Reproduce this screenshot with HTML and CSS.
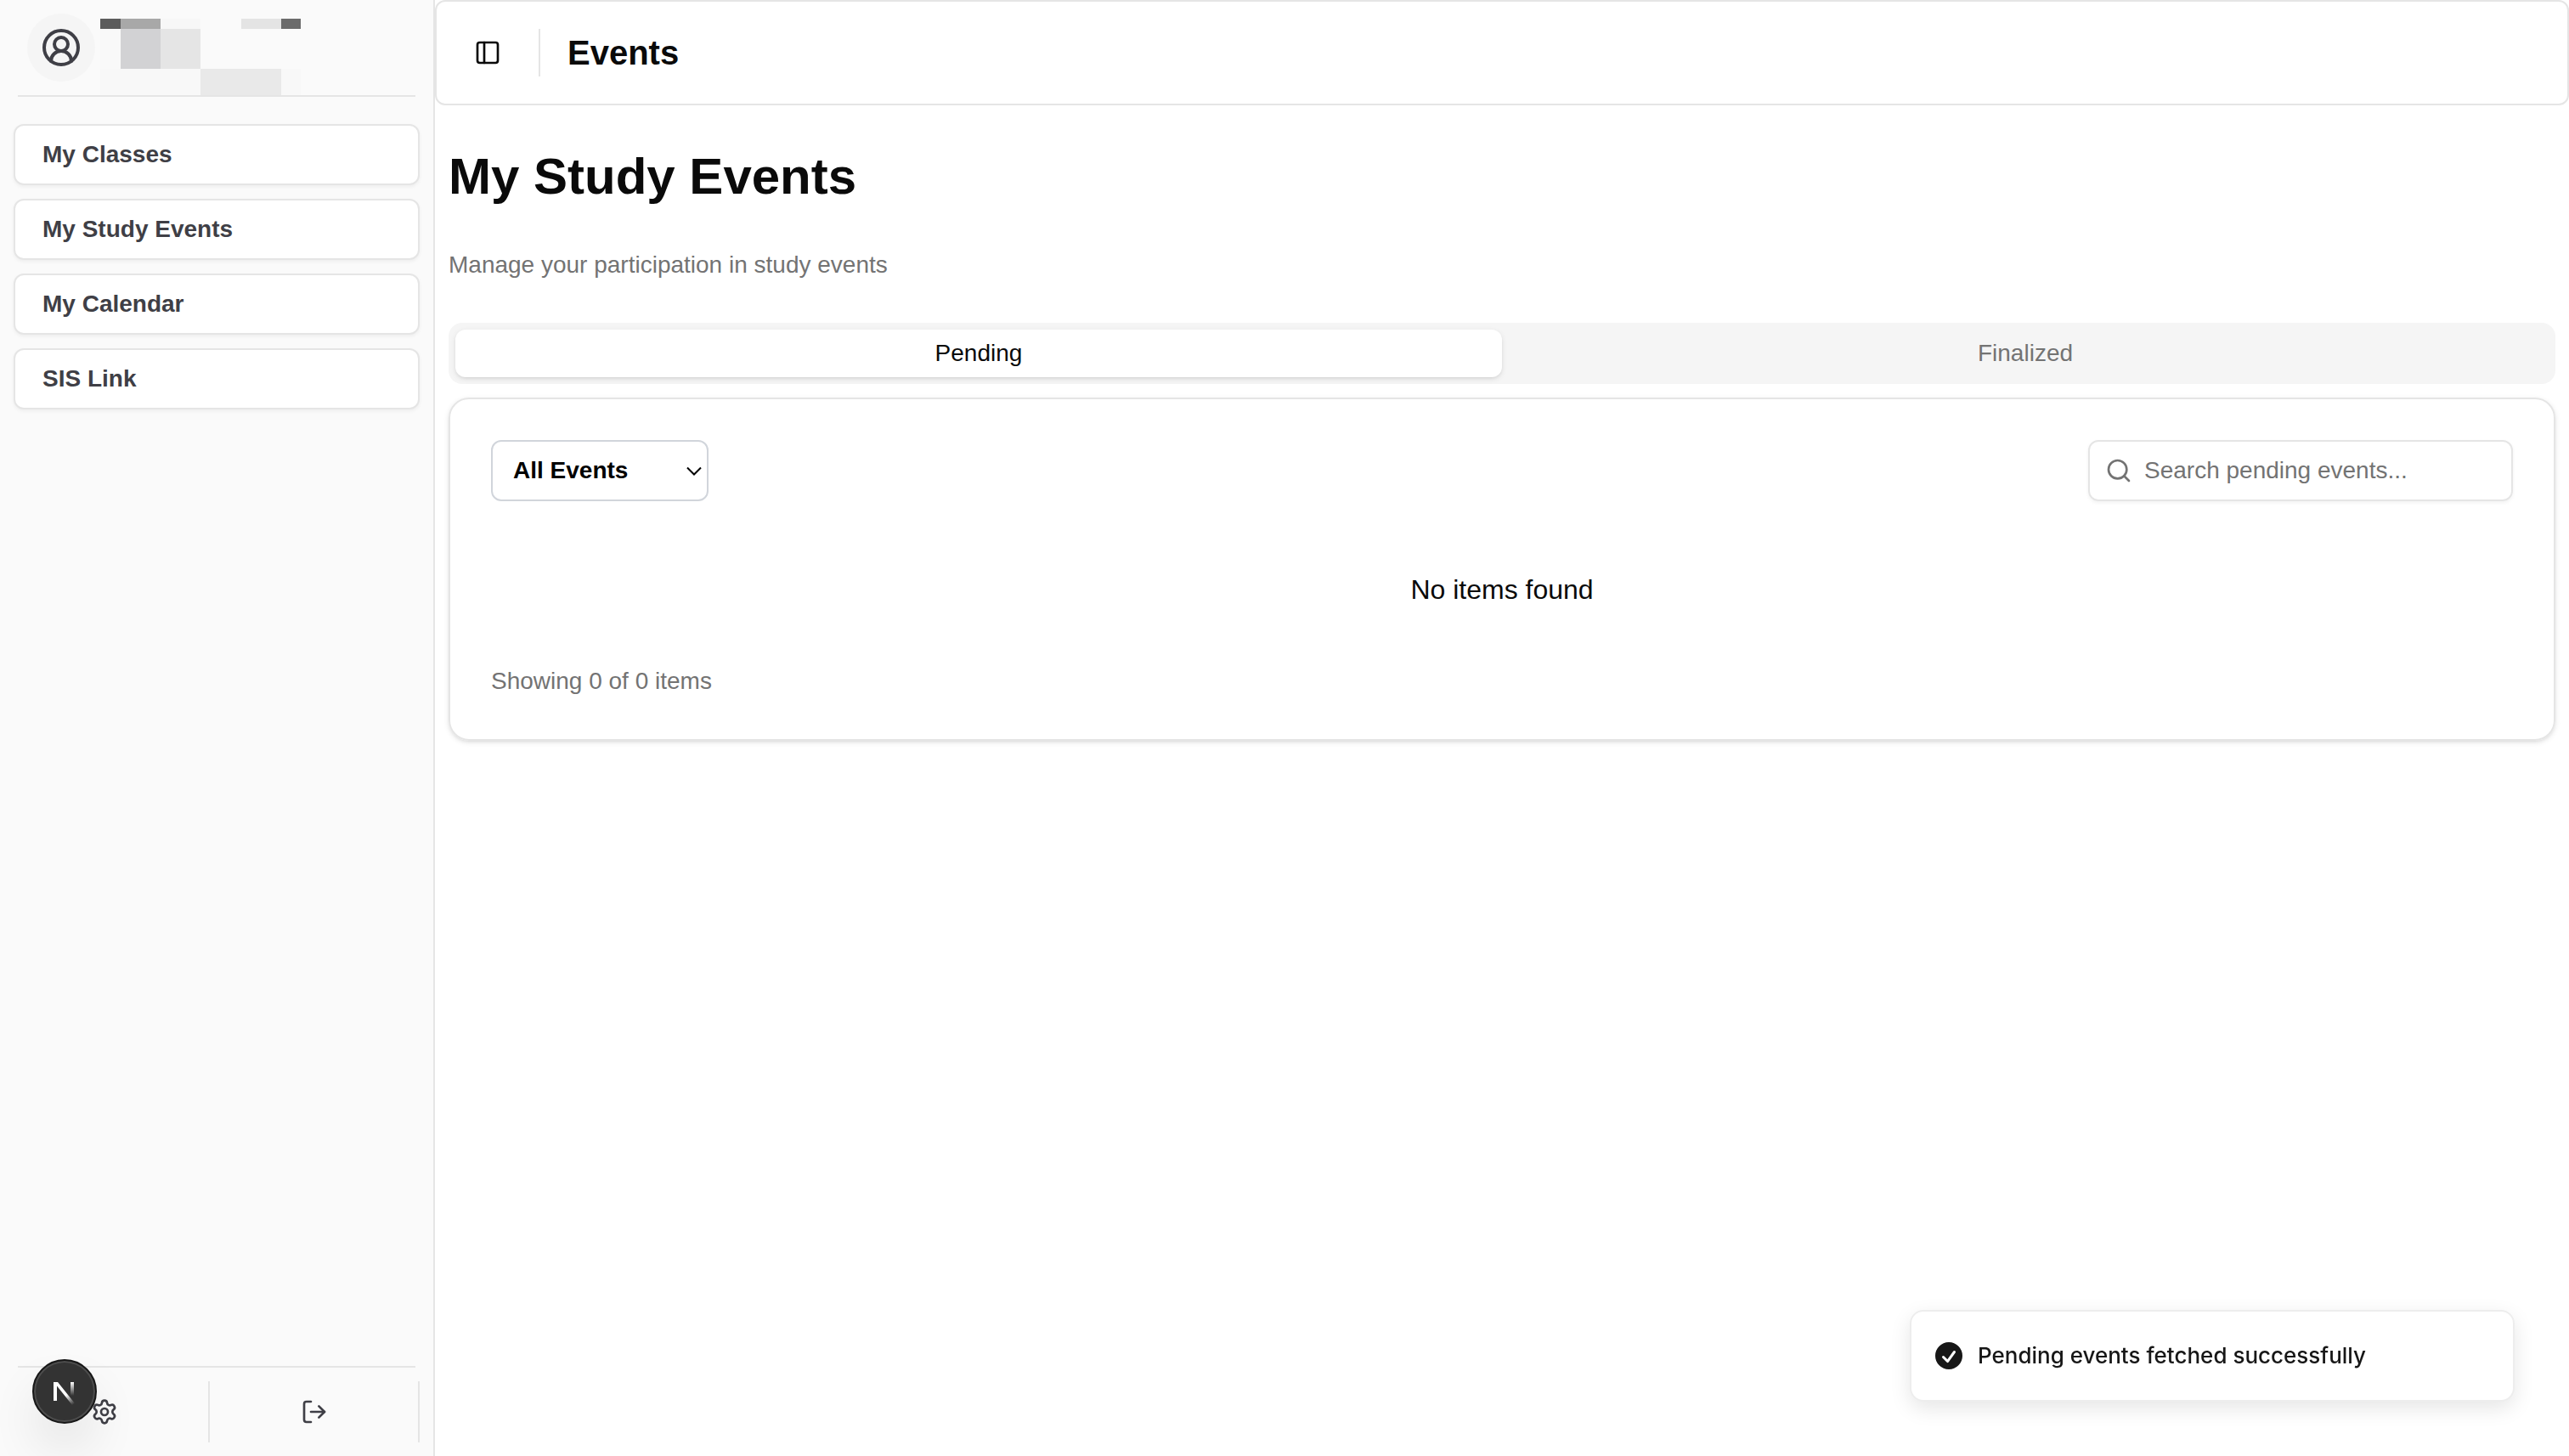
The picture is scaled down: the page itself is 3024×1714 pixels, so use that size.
FILE: index.html
```html
<!DOCTYPE html>
<html lang="en">
<head>
<meta charset="utf-8">
<meta name="viewport" content="width=device-width, initial-scale=1">
<title>Events</title>
<link rel="stylesheet" href="styles.css">
</head>
<body>
<div class="app">
  <aside class="sidebar">
    <header class="profile">
      <span class="avatar">
        <svg class="icon icon-lg" viewBox="0 0 24 24" aria-hidden="true"><path d="M18 20a6 6 0 0 0-12 0"/><circle cx="12" cy="10" r="4"/><circle cx="12" cy="12" r="10"/></svg>
      </span>
      <svg class="redacted" viewBox="0 0 236 90" shape-rendering="crispEdges" aria-hidden="true">
        <rect width="24" height="12" fill="#5c5c5c"/>
        <rect x="24" width="47" height="12" fill="#a8a8a8"/>
        <rect x="71" width="47" height="12" fill="#f7f7f7"/>
        <rect x="166" width="47" height="12" fill="#e4e4e4"/>
        <rect x="213" width="23" height="12" fill="#6b6b6b"/>
        <rect y="12" width="24" height="47" fill="#f9f9f9"/>
        <rect x="24" y="12" width="47" height="47" fill="#d2d2d4"/>
        <rect x="71" y="12" width="47" height="47" fill="#e5e5e5"/>
        <rect y="59" width="118" height="31" fill="#f8f8f8"/>
        <rect x="118" y="59" width="95" height="31" fill="#e9e9e9"/>
        <rect x="213" y="59" width="23" height="31" fill="#f8f8f8"/>
      </svg>
    </header>
    <nav class="menu">
      <a class="menu-link" href="#classes">My Classes</a>
      <a class="menu-link" href="#events">My Study Events</a>
      <a class="menu-link" href="#calendar">My Calendar</a>
      <a class="menu-link" href="#sis">SIS Link</a>
    </nav>
    <footer class="sidebar-footer">
      <button class="footer-button" type="button" aria-label="Settings">
        <svg class="icon" viewBox="0 0 24 24" aria-hidden="true"><path d="M9.671 4.136a2.340 2.340 0 0 1 4.659 0 2.340 2.340 0 0 0 3.319 1.915 2.340 2.340 0 0 1 2.330 4.033 2.340 2.340 0 0 0 0 3.831 2.340 2.340 0 0 1-2.330 4.033 2.340 2.340 0 0 0-3.319 1.915 2.340 2.340 0 0 1-4.659 0 2.340 2.340 0 0 0-3.320-1.915 2.340 2.340 0 0 1-2.330-4.033 2.340 2.340 0 0 0 0-3.831A2.340 2.340 0 0 1 6.350 6.051a2.340 2.340 0 0 0 3.319-1.915"/><circle cx="12" cy="12" r="3"/></svg>
      </button>
      <button class="footer-button" type="button" aria-label="Log out">
        <svg class="icon" viewBox="0 0 24 24" aria-hidden="true"><path d="M9 21H5a2 2 0 0 1-2-2V5a2 2 0 0 1 2-2h4"/><path d="m16 17 5-5-5-5"/><path d="M21 12H9"/></svg>
      </button>
    </footer>
  </aside>

  <main class="content">
    <header class="topbar">
      <button class="toggle" type="button" aria-label="Toggle sidebar">
        <svg class="icon" viewBox="0 0 24 24" aria-hidden="true"><rect x="3" y="3" width="18" height="18" rx="2"/><path d="M9 3v18"/></svg>
      </button>
      <span class="divider"></span>
      <h2 class="topbar-title">Events</h2>
    </header>
    <div class="page">
      <h1 class="page-title">My Study Events</h1>
      <p class="page-lead">Manage your participation in study events</p>
      <div class="tabs" role="tablist">
        <button class="tab tab-active" type="button" role="tab" aria-selected="true">Pending</button>
        <button class="tab" type="button" role="tab" aria-selected="false">Finalized</button>
      </div>
      <section class="card">
        <div class="toolbar">
          <div class="filter">
            <select class="filter-select" aria-label="Filter events"><option>All Events</option></select>
            <svg class="chevron" viewBox="0 0 18 12" aria-hidden="true"><path d="M1 1.500 9 9.500 17 1.500"/></svg>
          </div>
          <label class="search">
            <svg class="icon" viewBox="0 0 24 24" aria-hidden="true"><circle cx="11" cy="11" r="8"/><path d="m21 21-4.300-4.300"/></svg>
            <input class="search-input" type="text" placeholder="Search pending events..." aria-label="Search pending events">
          </label>
        </div>
        <p class="empty">No items found</p>
        <p class="count">Showing 0 of 0 items</p>
      </section>
    </div>
  </main>
</div>

<div class="toast" role="status">
  <svg class="toast-icon" viewBox="0 0 20 20" aria-hidden="true"><path fill-rule="evenodd" clip-rule="evenodd" d="M10 18a8 8 0 100-16 8 8 0 000 16zm3.857-9.809a.75.75 0 00-1.214-.882l-3.483 4.790-1.880-1.880a.75.75 0 10-1.060 1.061l2.500 2.500a.75.75 0 001.137-.089l4-5.500z"/></svg>
  <span>Pending events fetched successfully</span>
</div>

<button class="dev-badge" type="button" aria-label="Open dev tools">
  <svg class="dev-mark" viewBox="0 0 40 40" aria-hidden="true">
    <defs>
      <linearGradient id="diagonal" gradientUnits="userSpaceOnUse" x1="22" y1="24" x2="31" y2="35"><stop stop-color="#fff"/><stop offset="1" stop-color="#fff" stop-opacity="0"/></linearGradient>
      <linearGradient id="stem" gradientUnits="userSpaceOnUse" x1="28" y1="9" x2="28" y2="25"><stop stop-color="#fff"/><stop offset="1" stop-color="#fff" stop-opacity="0"/></linearGradient>
    </defs>
    <path d="M7 9h4v22H7z" fill="#fff"/>
    <path d="M7 9h5l20 25-3 2L9 11z" fill="url(#diagonal)"/>
    <path d="M27 9h4v16h-4z" fill="url(#stem)"/>
  </svg>
</button>
</body>
</html>
```
FILE: styles.css
```css
:root {
  --border: #e5e5e5;
  --muted: #737373;
  --ink: #0a0a0a;
  --sidebar-ink: #3f3f46;
  --shadow-xs: 0 2px 4px rgba(0, 0, 0, 0.05);
  --shadow-sm: 0 2px 6px rgba(0, 0, 0, 0.1), 0 2px 4px -2px rgba(0, 0, 0, 0.1);
}

* { box-sizing: border-box; }

body {
  margin: 0;
  background: #fff;
  color: var(--ink);
  font-family: "Liberation Sans", Arial, sans-serif;
  font-size: 28px;
  line-height: 40px;
}

h1, h2, p { margin: 0; }

button, input, select { font: inherit; color: inherit; }

button {
  display: flex;
  align-items: center;
  justify-content: center;
  padding: 0;
  border: 0;
  background: none;
}

.icon {
  width: 32px;
  height: 32px;
  flex: none;
  fill: none;
  stroke: currentColor;
  stroke-width: 2;
  stroke-linecap: round;
  stroke-linejoin: round;
}

.icon-lg { width: 48px; height: 48px; }

.app { display: flex; min-height: 100vh; }

/* Sidebar */
.sidebar {
  display: flex;
  flex-direction: column;
  flex: none;
  width: 512px;
  border-right: 2px solid var(--border);
  background: #fafafa;
  color: var(--sidebar-ink);
}

.profile {
  display: flex;
  gap: 6px;
  height: 114px;
  margin: 0 21px;
  padding-left: 11px;
  border-bottom: 2px solid var(--border);
}

.avatar {
  display: flex;
  align-items: center;
  justify-content: center;
  width: 80px;
  height: 80px;
  margin-top: 16px;
  border-radius: 50%;
  background: #f5f5f5;
}

.redacted { width: 236px; height: 90px; margin-top: 22px; }

.menu {
  display: flex;
  flex-direction: column;
  gap: 16px;
  padding: 32px 16px;
}

.menu-link {
  padding: 14px 32px;
  border: 2px solid var(--border);
  border-radius: 12px;
  background: #fff;
  box-shadow: var(--shadow-xs);
  color: inherit;
  font-weight: 700;
  text-decoration: none;
}

.sidebar-footer {
  display: flex;
  margin-top: auto;
  padding: 18px 16px 16px 0;
  background: linear-gradient(var(--border), var(--border)) 21px 0 / calc(100% - 42px) 2px no-repeat;
}

.footer-button {
  flex: 1;
  height: 72px;
  border-right: 2px solid var(--border);
}

/* Main area */
.content { flex: 1; min-width: 0; }

.topbar {
  display: flex;
  align-items: center;
  height: 124px;
  padding: 0 32px;
  border: 2px solid var(--border);
  border-radius: 12px;
}

.toggle { width: 56px; height: 56px; }

.divider {
  width: 2px;
  height: 56px;
  margin: 0 32px;
  background: var(--border);
}

.topbar-title { font-size: 40px; line-height: 56px; }

.page { padding: 48px 16px; }

.page-title { font-size: 60px; line-height: 72px; }

.page-lead { margin: 48px 0; color: var(--muted); }

.tabs {
  display: grid;
  grid-template-columns: 1fr 1fr;
  padding: 8px;
  border-radius: 16px;
  background: #f5f5f5;
}

.tab {
  height: 56px;
  border-radius: 12px;
  color: var(--muted);
}

.tab-active {
  background: #fff;
  box-shadow: var(--shadow-sm);
  color: var(--ink);
}

.card {
  margin-top: 16px;
  padding: 48px;
  border: 2px solid var(--border);
  border-radius: 24px;
  box-shadow: var(--shadow-sm);
}

.toolbar {
  display: flex;
  align-items: center;
  justify-content: space-between;
}

.filter { position: relative; }

.filter-select {
  display: block;
  appearance: none;
  width: 256px;
  height: 72px;
  padding: 0 24px;
  border: 2px solid #d1d5db;
  border-radius: 12px;
  background: #fff;
  color: #000;
  font-weight: 700;
}

.chevron {
  position: absolute;
  top: 31px;
  right: 8px;
  width: 18px;
  height: 12px;
  fill: none;
  stroke: #000;
  stroke-width: 2;
  pointer-events: none;
}

.search {
  display: flex;
  align-items: center;
  gap: 14px;
  width: 500px;
  height: 72px;
  padding: 0 18px;
  border: 2px solid var(--border);
  border-radius: 12px;
  box-shadow: var(--shadow-xs);
  color: var(--muted);
}

.search-input {
  flex: 1;
  min-width: 0;
  padding: 0;
  border: 0;
  outline: 0;
  background: none;
}

.search-input::placeholder { color: var(--muted); opacity: 1; }

.empty {
  padding: 80px 0 64px;
  font-size: 32px;
  line-height: 48px;
  text-align: center;
}

.count { color: var(--muted); }

/* Overlays */
.toast {
  position: fixed;
  right: 64px;
  bottom: 64px;
  display: flex;
  align-items: center;
  gap: 14px;
  width: 712px;
  padding: 32px 24px;
  border: 2px solid #ededed;
  border-radius: 16px;
  background: #fff;
  box-shadow: 0 8px 24px rgba(0, 0, 0, 0.1);
  color: #171717;
  font-family: Inter, "Liberation Sans", sans-serif;
  font-size: 26px;
  font-weight: 500;
  line-height: 40px;
}

.toast-icon { width: 40px; height: 40px; fill: currentColor; }

.dev-badge {
  position: fixed;
  left: 38px;
  bottom: 38px;
  width: 76px;
  height: 76px;
  border: 2px solid #171717;
  border-radius: 50%;
  background: #333;
  box-shadow: inset 0 0 0 2px #4d4d4d, 0 32px 64px -16px rgba(0, 0, 0, 0.24);
}

.dev-mark { width: 40px; height: 40px; }
```
